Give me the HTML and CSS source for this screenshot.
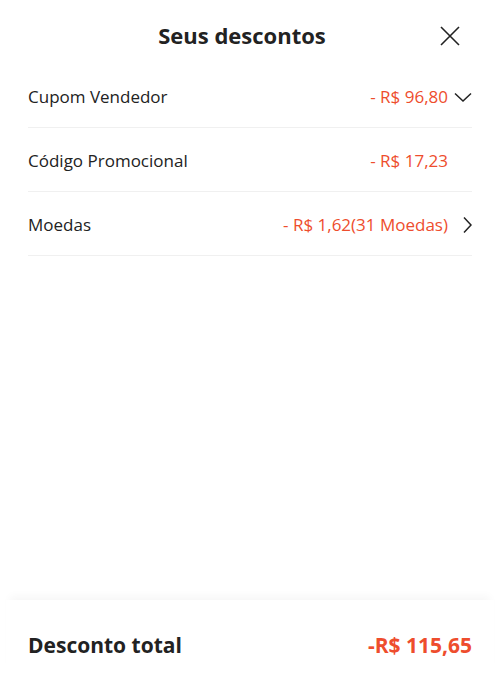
FILE: index.html
```html
<!DOCTYPE html>
<html lang="pt-BR">
<head>
<meta charset="utf-8">
<link rel="stylesheet" href="styles.css">
</head>
<body>
<div class="sheet">
  <header class="head">
    <h1 class="title">Seus descontos</h1>
    <button class="close" aria-label="Fechar">
      <svg width="20" height="20" viewBox="0 0 20 20"><path d="M1 1L19 19M19 1L1 19" stroke="#222" stroke-width="1.6" fill="none"/></svg>
    </button>
  </header>
  <ul class="list">
    <li class="row">
      <span class="label">Cupom Vendedor</span>
      <span class="value">- R$ 96,80</span>
      <span class="icon"><svg width="18" height="10" viewBox="0 0 18 10"><path d="M1 1.5L9 9L17 1.5" stroke="#222" stroke-width="1.5" fill="none"/></svg></span>
    </li>
    <li class="row">
      <span class="label">Código Promocional</span>
      <span class="value">- R$ 17,23</span>
      <span class="icon"></span>
    </li>
    <li class="row">
      <span class="label">Moedas</span>
      <span class="value">- R$ 1,62(31 Moedas)</span>
      <span class="icon"><svg width="10" height="18" viewBox="0 0 10 18"><path d="M2 1.5L9 9L2 16.5" stroke="#222" stroke-width="1.5" fill="none"/></svg></span>
    </li>
  </ul>
  <footer class="foot">
    <span class="total-label">Desconto total</span>
    <span class="total-value">-R$ 115,65</span>
  </footer>
</div>
</body>
</html>
```
FILE: styles.css
```css
* { box-sizing: border-box; }
html, body { margin: 0; padding: 0; background: #fff; }
body {
  font-family: "Open Sans", "Noto Sans", sans-serif;
  color: #222;
  width: 500px;
  height: 678px;
  overflow: hidden;
}
.sheet {
  height: 678px;
  display: flex;
  flex-direction: column;
}
.head {
  height: 70px;
  display: flex;
  align-items: center;
  justify-content: center;
  position: relative;
}
.title {
  margin: 0 16px 0 0;
  font-size: 22px;
  font-weight: 700;
  color: #222;
}
.close {
  position: absolute;
  right: 40px;
  top: 26px;
  padding: 0;
  border: 0;
  background: none;
  width: 20px;
  height: 20px;
  display: flex;
}
.list {
  list-style: none;
  margin: 0;
  padding: 0 28px;
  flex: 1;
}
.row {
  height: 64px;
  display: flex;
  align-items: center;
  border-bottom: 1px solid #f0f0f0;
  font-size: 17px;
  font-weight: 500;
  padding-top: 2px;
}
.row:first-child { height: 58px; padding-top: 0; padding-bottom: 4px; }
.label { flex: 1; color: #222; }
.value { color: #ee4d2d; }
.icon {
  width: 24px;
  display: flex;
  justify-content: flex-end;
  align-items: center;
}
.foot {
  height: 78px;
  display: flex;
  align-items: center;
  justify-content: space-between;
  margin: 0 6px;
  padding: 12px 22px 0;
  box-shadow: 0 -8px 8px -4px rgba(0,0,0,0.035);
  background: #fff;
}
.total-label { font-size: 21px; font-weight: 700; color: #222; }
.total-value { font-size: 21px; font-weight: 700; color: #ee4d2d; }
```
